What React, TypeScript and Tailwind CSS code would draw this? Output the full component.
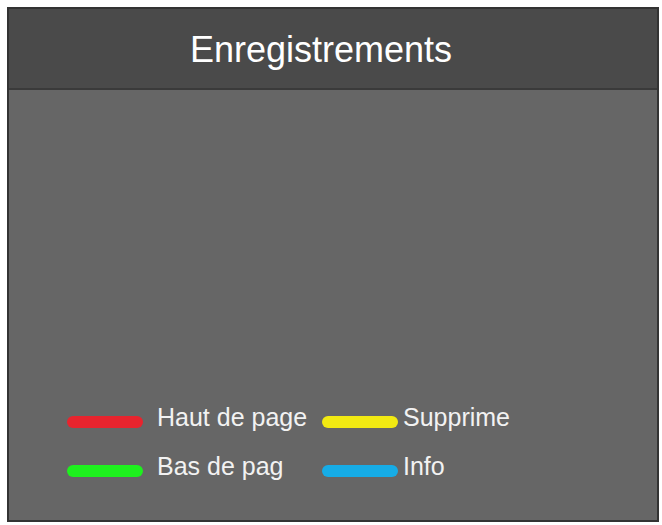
const legend = [
  [
    { color: "bg-[#e8242e]", label: "Haut de page" },
    { color: "bg-[#f2ea12]", label: "Supprime" },
  ],
  [
    { color: "bg-[#1ef01e]", label: "Bas de pag" },
    { color: "bg-[#16ace6]", label: "Info" },
  ],
];

function Bar({ color }: { color: string }) {
  return <span className={`block h-[12px] w-[76px] shrink-0 rounded-full ${color}`} />;
}

export default function App() {
  return (
    <div
      className="h-[525px] w-[662px] bg-white pl-[7px] pt-[7px]"
      style={{ fontFamily: '"Liberation Sans", Arial, sans-serif' }}
    >
      <div className="flex h-[515px] w-[652px] flex-col border-2 border-[#333333] bg-[#666666]">
        <div className="flex h-[81px] shrink-0 items-center justify-center border-b-2 border-[#3a3a3a] bg-[#4a4a4a] pr-[24px] pt-[3px]">
          <h1 className="text-[36px] leading-none text-white">Enregistrements</h1>
        </div>
        <div className="flex flex-1 flex-col justify-end gap-[21px] pb-[35px] pl-[58px]">
          {legend.map((row, i) => (
            <div key={i} className="flex h-[28px] items-center">
              <Bar color={row[0].color} />
              <span className="mb-[9px] ml-[14px] w-[165px] text-[25px] leading-none text-[#f2f2f2]">
                {row[0].label}
              </span>
              <Bar color={row[1].color} />
              <span className="mb-[9px] ml-[5px] text-[25px] leading-none text-[#f2f2f2]">
                {row[1].label}
              </span>
            </div>
          ))}
        </div>
      </div>
    </div>
  );
}
